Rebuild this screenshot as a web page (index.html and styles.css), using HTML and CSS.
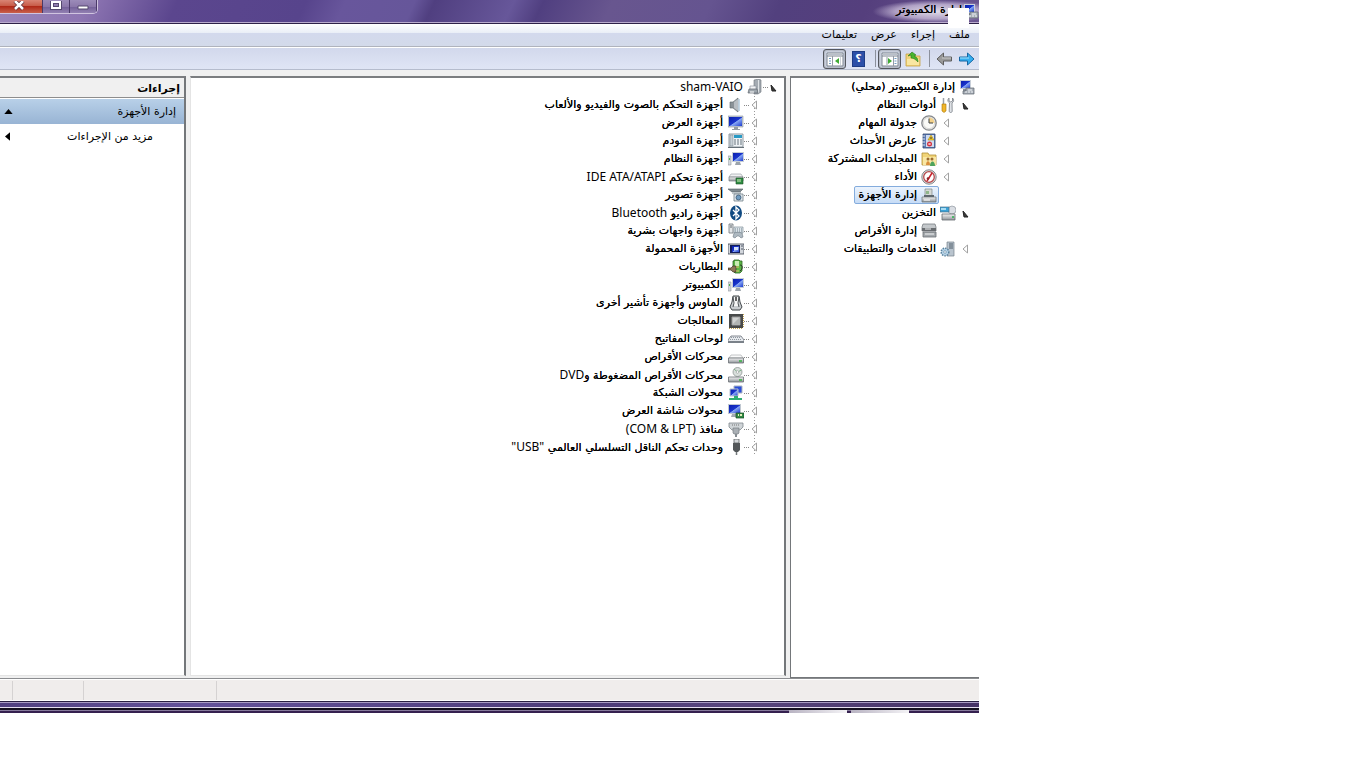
FILE: index.html
```
<!DOCTYPE html>
<html lang="ar" dir="rtl">
<head>
    <meta charset="UTF-8">
    <meta name="viewport" content="width=device-width, initial-scale=1.0">
    <title>إدارة الكمبيوتر</title>
    <link rel="stylesheet" href="styles.css">
</head>
<body>
    <!-- icon sprite -->
    <svg class="sprite" aria-hidden="true">
        <defs>
            <linearGradient id="blue" x1="0" y1="0" x2="1" y2="1">
                <stop offset="0" stop-color="#0a1fae"/><stop offset=".5" stop-color="#1a35cc"/><stop offset=".55" stop-color="#88a8f4"/><stop offset="1" stop-color="#1c3bd0"/>
            </linearGradient>
            <linearGradient id="grey" x1="0" y1="0" x2="0" y2="1">
                <stop offset="0" stop-color="#f4f4f4"/><stop offset="1" stop-color="#8f9499"/>
            </linearGradient>
        </defs>
        <symbol id="i-computer" viewBox="0 0 16 16"><path d="M1 1h11v9H1z" fill="#c9d0da"/><path d="M2 2h9v7H2z" fill="url(#blue)"/><path d="M4 10h5v2H4z" fill="#8b929b"/><path d="M7 9h8v6H4v-3h3z" fill="#a9b0b8" stroke="#5d656e" stroke-width=".7"/><path d="M6 13h2M9 13h2M12 13h2M9 11h4" stroke="#eef1f5"/></symbol>
        <symbol id="i-tools" viewBox="0 0 16 16"><path d="M3.500 1v7" stroke="#9aa0a8" stroke-width="1.500"/><path d="M2 7h4v7l-2 1.500L2 14z" fill="#f0b62c" stroke="#a97508" stroke-width=".6"/><path d="M9 1c-2 2-1 4 .5 5l-.3 8c0 2 3 2 3 0l-.2-8c2-1 2-4 .5-5v3l-1.700 1L9 4z" fill="#dfe2e6" stroke="#777d85" stroke-width=".8"/></symbol>
        <symbol id="i-clock" viewBox="0 0 16 16"><circle cx="8" cy="8" r="7.200" fill="#ecebe6" stroke="#85888c" stroke-width="1.300"/><circle cx="8" cy="8" r="5.600" fill="#fafaf7" stroke="#c6c8c9" stroke-width=".6"/><path d="M8 2.500A5.500 5.500 0 0 1 13.500 8H8z" fill="#f3d28c"/><path d="M8 3.500V8h4" fill="none" stroke="#3f4245"/></symbol>
        <symbol id="i-events" viewBox="0 0 16 16"><path d="M2 1h12v14H2z" fill="#5b79b3" stroke="#32496f" stroke-width=".8"/><path d="M5 2h8v12H5z" fill="#cfdcf0"/><path d="M1 3h3M1 6h3M1 9h3M1 12h3" stroke="#dce3ef"/><path d="M10 2l3 5H7z" fill="#f7cf2b" stroke="#9f7b00" stroke-width=".5"/><path d="M10 4v2" stroke="#333"/><circle cx="8.500" cy="11" r="2.500" fill="#d4313e"/><path d="M7.500 10l2 2M9.500 10l-2 2" stroke="#fff" stroke-width=".8"/></symbol>
        <symbol id="i-shared" viewBox="0 0 16 16"><path d="M1 2h6l1 2h7v10H1z" fill="#f1d477" stroke="#b18f37" stroke-width=".8"/><path d="M2 6h13v8H2z" fill="#f9e7a3"/><circle cx="7" cy="8" r="1.500" fill="#9a6a30"/><circle cx="11" cy="8" r="1.500" fill="#9a6a30"/><path d="M5 14c0-5 4-5 4 0z" fill="#d98e3a"/><path d="M9 15c0-6 5-6 5 0z" fill="#4fa35c"/></symbol>
        <symbol id="i-gauge" viewBox="0 0 16 16"><circle cx="8" cy="8" r="7.200" fill="#dcdddd" stroke="#85898c"/><circle cx="8" cy="8" r="5.300" fill="#fff" stroke="#b6494c" stroke-width="1.300"/><path d="M6 12l5-8" stroke="#c9202a" stroke-width="1.500"/><circle cx="7" cy="9.500" r="1.300" fill="#8e2228"/></symbol>
        <symbol id="i-devices" viewBox="0 0 16 16"><path d="M4 2h7v8H4z" fill="#d5d9d5" stroke="#7f8789" stroke-width=".7"/><path d="M5 4h3v3H5z" fill="#8fb68b"/><path d="M3 8h10v3H3z" fill="#5f686e"/><path d="M1 10h14v5H1z" fill="url(#grey)" stroke="#666d73" stroke-width=".7"/><path d="M3 13h6" stroke="#fff"/></symbol>
        <symbol id="i-storage" viewBox="0 0 16 16"><circle cx="12" cy="5" r="4" fill="#d9dde3" stroke="#9299a2" stroke-width=".7"/><path d="M0 2h9v5H0z" fill="#3aa2d8" stroke="#4d7188" stroke-width=".7"/><path d="M1 3h5v2H1z" fill="#a7dcf4"/><path d="M2 9h13v6H2z" fill="url(#grey)" stroke="#656a70" stroke-width=".8"/><path d="M12 12h2" stroke="#29b34b" stroke-width="1.500"/></symbol>
        <symbol id="i-disks" viewBox="0 0 16 16"><path d="M2 1h12l1 3v4H1V4z" fill="#c4c8cb" stroke="#7a7f83" stroke-width=".8"/><path d="M1 5h14v3H1z" fill="#686c70"/><path d="M2 9h13v5H2z" fill="#a3a8ac" stroke="#6b7074" stroke-width=".8"/><path d="M4 6h6M4 11h9" stroke="#f1f2f3"/></symbol>
        <symbol id="i-services" viewBox="0 0 16 16"><path d="M7 1h7v14H7z" fill="#b9c4ce" stroke="#75818b" stroke-width=".7"/><path d="M9 3h4M9 5h4M9 7h4" stroke="#4f5d68"/><circle cx="5" cy="11" r="3.800" fill="#b6d3e8" stroke="#58829e" stroke-width="1.500" stroke-dasharray="1.500 1"/><circle cx="5" cy="11" r="1.300" fill="#fff" stroke="#58829e" stroke-width=".6"/></symbol>
        <symbol id="i-host" viewBox="0 0 16 16"><path d="M7 1l5-1 2 1v12l-3 2H7z" fill="#a4abb2" stroke="#6b7279" stroke-width=".6"/><path d="M11.500 1v13" stroke="#dfe3e6"/><path d="M3 7h6v4H3z" fill="#f1f3f5" stroke="#858c93" stroke-width=".6"/><path d="M2 10h8l1 4H1z" fill="#9da5ac" stroke="#626970" stroke-width=".7"/><path d="M3 13h4" stroke="#fff"/></symbol>
        <symbol id="i-sound" viewBox="0 0 16 16"><path d="M2 5h3l5-4v14l-5-4H2z" fill="#8b9298" stroke="#5d646a" stroke-width=".6"/><path d="M6 5l4-3v12l-4-3z" fill="#b9bec3"/><path d="M11 2v12" stroke="#b3cadb" stroke-width="1.500"/></symbol>
        <symbol id="i-monitor" viewBox="0 0 16 16"><path d="M0 1h15v11H0z" fill="#c3cad3" stroke="#8c949d" stroke-width=".6"/><path d="M1 2h13v9H1z" fill="url(#blue)"/><path d="M6 12h4v2h2v1H4v-1h2z" fill="#949ca5"/></symbol>
        <symbol id="i-modem" viewBox="0 0 16 16"><path d="M1 1h14v13H1z" fill="#eef3f6" stroke="#77828a" stroke-width=".8"/><path d="M2 2h3v11H2z" fill="#c5ced5" stroke="#75818a" stroke-width=".5"/><path d="M6 2h8v3H6z" fill="#299ac5"/><path d="M6 7h8M6 9h8M6 11h8" stroke="#66737c" stroke-dasharray="2 1"/><path d="M0 14h16v1H0z" fill="#657078"/></symbol>
        <symbol id="i-pc" viewBox="0 0 16 16"><path d="M4 1h12v10H4z" fill="#c7ced6"/><path d="M5 2h10v8H5z" fill="url(#blue)"/><path d="M8 11h4l1 3H7z" fill="#9ba3ab"/><path d="M0 5h3v9H0z" fill="#d4d9dd" stroke="#8d959c" stroke-width=".6"/><path d="M1 8h1" stroke="#4fb04c" stroke-width="2"/></symbol>
        <symbol id="i-ide" viewBox="0 0 16 16"><path d="M3 5h10l2 3H1z" fill="#f0f1f2" stroke="#92989d" stroke-width=".6"/><path d="M1 8h14v4H1z" fill="url(#grey)" stroke="#767c81" stroke-width=".7"/><path d="M8 9h7v6H8z" fill="#2f8d43" stroke="#174f24" stroke-width=".6"/><path d="M10 10v3M12 10v3" stroke="#d7ecc0"/></symbol>
        <symbol id="i-imaging" viewBox="0 0 16 16"><path d="M0 2h15l-3 3H4z" fill="#808b91" stroke="#4e595f" stroke-width=".6"/><path d="M4 5h9v2H4z" fill="#bcc4c8"/><path d="M6 7h9v7H6z" fill="#dfe7ed" stroke="#718089" stroke-width=".8"/><circle cx="10.500" cy="10.500" r="2.500" fill="#6f9bc0" stroke="#38566f" stroke-width=".8"/></symbol>
        <symbol id="i-bluetooth" viewBox="0 0 16 16"><ellipse cx="8" cy="8" rx="6" ry="7.500" fill="#104a82"/><path d="M5 5l6 6-3 3V2l3 3-6 6" fill="none" stroke="#fff" stroke-width="1.300"/></symbol>
        <symbol id="i-hid" viewBox="0 0 16 16"><path d="M1 1h4v9H1z" fill="#e4e7e9" stroke="#6c747a" stroke-width=".8"/><path d="M3 2v3" stroke="#5e666c"/><path d="M6 4h9v6H6z" fill="#dce5eb" stroke="#81909a" stroke-width=".7"/><path d="M7 6h7M7 8h7" stroke="#72818a" stroke-dasharray="1 1"/><path d="M6 10c2-1 6-1 8 0l1 4-2 1-2-2H9l-2 2-2-1z" fill="#aeb9c1" stroke="#6e7b84" stroke-width=".6"/></symbol>
        <symbol id="i-portable" viewBox="0 0 16 16"><path d="M0 3h16v10H0z" fill="#d2d6dc" stroke="#3d4450" stroke-width=".8"/><path d="M2 4h10v8H2z" fill="#101c5c"/><path d="M4 5h7v6H4z" fill="url(#blue)"/><path d="M6 6h4v3H6z" fill="#d2e0fb"/><path d="M13 5h2M13 8h2" stroke="#4d5664"/></symbol>
        <symbol id="i-battery" viewBox="0 0 16 16"><path d="M6 1h5l1 1h2v10l-2 2H7l-2-2V2h1z" fill="#5cb645" stroke="#2f6523" stroke-width=".8"/><path d="M7 2h4v5H7z" fill="#c9ecb3"/><path d="M0 9h3l2-2h3v6H5L3 11H0z" fill="#8d7857" stroke="#332719" stroke-width=".6"/><path d="M8 8h3M8 12h3" stroke="#e4c46c"/><path d="M12 6c3 0 3 4 0 6" fill="none" stroke="#293329"/></symbol>
        <symbol id="i-mouse" viewBox="0 0 16 16"><path d="M5 1h6l1 6 2 5-2 3H4l-2-3 2-5z" fill="#c8cccf" stroke="#43484b"/><path d="M6 2h4l1 6-1 3H6L5 8z" fill="#f5f6f6"/><path d="M5 2l1 6-1 4M11 2l-1 6 1 4" fill="none" stroke="#4c5154"/><path d="M8 2v4" stroke="#333" stroke-width="1.500"/></symbol>
        <symbol id="i-cpu" viewBox="0 0 16 16"><path d="M1 1h14v14H1z" fill="#484a4a"/><path d="M1 15.500h14M15.500 1v14" stroke="#c3a24d" stroke-dasharray="1 1"/><path d="M4 4h8v8H4z" fill="#d0d2d1" stroke="#999"/><path d="M4 12l8-8v8z" fill="#b1b4b3"/></symbol>
        <symbol id="i-keyboard" viewBox="0 0 16 16"><path d="M3 5h10l3 4v2H0V9z" fill="#e5e8ec" stroke="#697078" stroke-width=".8"/><path d="M3 6.500h10M2 8.500h12" stroke="#8f979f" stroke-dasharray="1 1"/><path d="M0 10h16v2H0z" fill="#7a8189"/></symbol>
        <symbol id="i-drive" viewBox="0 0 16 16"><path d="M3 6h10l2 3H1z" fill="#fafafa" stroke="#9da1a5" stroke-width=".6"/><path d="M.5 9h15v5H.5z" fill="url(#grey)" stroke="#6a6f73" stroke-width=".8"/><path d="M11 12h3" stroke="#35b33f" stroke-width="1.500"/></symbol>
        <symbol id="i-dvd" viewBox="0 0 16 16"><circle cx="9.500" cy="5" r="4.500" fill="#d9dfdc" stroke="#8e9693" stroke-width=".8"/><path d="M9.500 5L6 2M9.500 5l4-2" stroke="#81b28c"/><circle cx="9.500" cy="5" r="1.300" fill="#fff" stroke="#8e9693" stroke-width=".6"/><path d="M.5 10h15v5H.5z" fill="url(#grey)" stroke="#6a6f73" stroke-width=".8"/><path d="M11 13h3" stroke="#35b33f" stroke-width="1.500"/></symbol>
        <symbol id="i-network" viewBox="0 0 16 16"><path d="M6 1h8v7H6z" fill="#2b4fd8" stroke="#aab3c0"/><path d="M2 4h8v7H2z" fill="url(#blue)" stroke="#b9c2ce"/><path d="M6 11h4v2h4v2H1v-2h5z" fill="#2fae73"/></symbol>
        <symbol id="i-display" viewBox="0 0 16 16"><path d="M0 1h13v10H0z" fill="#c0c8d1"/><path d="M1 2h11v8H1z" fill="url(#blue)"/><path d="M4 11h5v3H3z" fill="#a2aab2"/><path d="M8 10h8v5H8z" fill="#328a45" stroke="#164c22" stroke-width=".7"/><path d="M10 12h1M12 12h2" stroke="#e3f0bb" stroke-width="2"/></symbol>
        <symbol id="i-port" viewBox="0 0 16 16"><path d="M1 2h14v4l-3 3H4L1 6z" fill="#cfd4d7" stroke="#80888d" stroke-width=".8"/><path d="M4 4h8" stroke="#777" stroke-dasharray="1 1"/><path d="M5 7h6v5l-1 1H6l-1-1z" fill="#aab0b5" stroke="#6e757a" stroke-width=".6"/><path d="M8 13v3" stroke="#868d92" stroke-width="2"/></symbol>
        <symbol id="i-usb" viewBox="0 0 16 16"><path d="M6 0h5v4H6z" fill="#d6d9db" stroke="#5d6265" stroke-width=".8"/><path d="M5 4h7v7l-2 2H7l-2-2z" fill="#535759"/><path d="M8.500 13v3" stroke="#73787b" stroke-width="1.500"/></symbol>
        <symbol id="i-forward" viewBox="0 0 16 14"><path d="M.5 5h8V1L15 7l-6.500 6V9h-8z" fill="#35aef0" stroke="#1767a3"/><path d="M1 6h9" stroke="#a3e2fb"/></symbol>
        <symbol id="i-back" viewBox="0 0 16 14"><path d="M15.500 5h-8V1L1 7l6.500 6V9h8z" fill="#9b9b9b" stroke="#5e5e5e"/><path d="M6 6h9" stroke="#ccc"/></symbol>
        <symbol id="i-folder" viewBox="0 0 16 16"><path d="M1 3h5l1 2h8v10H1z" fill="#f2d479" stroke="#c6a246" stroke-width=".8"/><path d="M2 8h12v6H2z" fill="#f9e6a1"/><path d="M3 5l4-4 4 3-2 1c3 1 4 3 4 6-2-2-4-4-7-4V4z" fill="#48b52d" stroke="#267717" stroke-width=".6"/></symbol>
        <symbol id="i-pane-right" viewBox="0 0 18 16"><path d="M1 2h16v13H1z" fill="#fff" stroke="#7b8390"/><path d="M1 5h16" stroke="#7b8390"/><path d="M2 3.500h14" stroke="#b8bfca"/><path d="M12.500 5v10M6 6v8" stroke="#949ba6"/><path d="M13.500 7.500h2m-2 2.500h2m-2 2.500h2" stroke="#6f9bc0"/><path d="M7 7l4 3-4 3z" fill="#3faa33"/></symbol>
        <symbol id="i-pane-left" viewBox="0 0 18 16"><path d="M1 2h16v13H1z" fill="#fff" stroke="#7b8390"/><path d="M1 5h16" stroke="#7b8390"/><path d="M2 3.500h14" stroke="#b8bfca"/><path d="M6.500 5v10" stroke="#949ba6"/><path d="M3 7.500h2M3 10h2M3 12.500h2" stroke="#6f9bc0"/><path d="M13 7l-4 3 4 3z" fill="#3faa33"/><path d="M14.500 6v8" stroke="#ccd1d8"/></symbol>
        <symbol id="i-closed" viewBox="0 0 8 10"><path d="M6.500 1v8L2 5z" fill="#fff" stroke="#a2a2a2"/></symbol>
        <symbol id="i-open" viewBox="0 0 8 10"><path d="M2 3l1 6h4z" fill="#3b3b3b" stroke="#222"/></symbol>
    </svg>

    <div class="window">
        <header class="titlebar">
            <div class="title">
                <svg class="icon"><use href="#i-computer"/></svg>
                <h1>إدارة الكمبيوتر</h1>
            </div>
            <div class="patch"></div>
            <div class="controls">
                <button class="control minimize" aria-label="تصغير"><svg viewBox="0 0 12 12"><path d="M1 5h10v3H1z" fill="#fff" stroke="#54496e"/></svg></button>
                <button class="control maximize" aria-label="تكبير"><svg viewBox="0 0 12 12"><path d="M2 1h8v6H2z" fill="none" stroke="#54496e" stroke-width="4"/><path d="M2 1h8v6H2z" fill="none" stroke="#fff" stroke-width="2"/></svg></button>
                <button class="control close" aria-label="إغلاق"><svg viewBox="0 0 12 12"><path d="M2 0l8 8M10 0L2 8" stroke="#5d3038" stroke-width="4"/><path d="M2 0l8 8M10 0L2 8" stroke="#fff" stroke-width="2.500"/></svg></button>
            </div>
        </header>

        <nav class="menubar">
            <button>ملف</button>
            <button>إجراء</button>
            <button>عرض</button>
            <button>تعليمات</button>
        </nav>

        <div class="toolbar">
            <button class="tool" aria-label="للأمام"><svg class="icon"><use href="#i-forward"/></svg></button>
            <button class="tool" aria-label="للخلف"><svg class="icon"><use href="#i-back"/></svg></button>
            <span class="divider"></span>
            <button class="tool" aria-label="مستوى لأعلى"><svg class="icon"><use href="#i-folder"/></svg></button>
            <button class="tool pressed" aria-label="شجرة وحدة التحكم"><svg class="icon wide"><use href="#i-pane-right"/></svg></button>
            <span class="divider"></span>
            <button class="tool" aria-label="تعليمات"><span class="help">؟</span></button>
            <button class="tool pressed" aria-label="جزء الإجراءات"><svg class="icon wide"><use href="#i-pane-left"/></svg></button>
        </div>

        <main class="panes">
            <section class="pane console">
                <ul class="tree">
                    <li>
                        <div class="row root"><span class="label"><svg class="icon"><use href="#i-computer"/></svg>إدارة الكمبيوتر (محلي)</span></div>
                        <ul>
                            <li>
                                <div class="row"><button class="toggle" aria-label="طي"><svg><use href="#i-open"/></svg></button><span class="label"><svg class="icon"><use href="#i-tools"/></svg>أدوات النظام</span></div>
                                <ul>
                                    <li class="row"><button class="toggle" aria-label="توسيع"><svg><use href="#i-closed"/></svg></button><span class="label"><svg class="icon"><use href="#i-clock"/></svg>جدولة المهام</span></li>
                                    <li class="row"><button class="toggle" aria-label="توسيع"><svg><use href="#i-closed"/></svg></button><span class="label"><svg class="icon"><use href="#i-events"/></svg>عارض الأحداث</span></li>
                                    <li class="row"><button class="toggle" aria-label="توسيع"><svg><use href="#i-closed"/></svg></button><span class="label"><svg class="icon"><use href="#i-shared"/></svg>المجلدات المشتركة</span></li>
                                    <li class="row"><button class="toggle" aria-label="توسيع"><svg><use href="#i-closed"/></svg></button><span class="label"><svg class="icon"><use href="#i-gauge"/></svg>الأداء</span></li>
                                    <li class="row"><span class="toggle"></span><span class="label selected"><svg class="icon"><use href="#i-devices"/></svg>إدارة الأجهزة</span></li>
                                </ul>
                            </li>
                            <li>
                                <div class="row"><button class="toggle" aria-label="طي"><svg><use href="#i-open"/></svg></button><span class="label"><svg class="icon"><use href="#i-storage"/></svg>التخزين</span></div>
                                <ul>
                                    <li class="row"><span class="toggle"></span><span class="label"><svg class="icon"><use href="#i-disks"/></svg>إدارة الأقراص</span></li>
                                </ul>
                            </li>
                            <li class="row"><button class="toggle" aria-label="توسيع"><svg><use href="#i-closed"/></svg></button><span class="label"><svg class="icon"><use href="#i-services"/></svg>الخدمات والتطبيقات</span></li>
                        </ul>
                    </li>
                </ul>
            </section>

            <section class="pane devices">
                <ul class="tree">
                    <li>
                        <div class="row"><button class="toggle" aria-label="طي"><svg><use href="#i-open"/></svg></button><span class="label"><svg class="icon"><use href="#i-host"/></svg><bdi class="latin">sham-VAIO</bdi></span></div>
                        <ul class="lines">
                            <li class="row"><button class="toggle" aria-label="توسيع"><svg><use href="#i-closed"/></svg></button><span class="label"><svg class="icon"><use href="#i-sound"/></svg>أجهزة التحكم بالصوت والفيديو والألعاب</span></li>
                            <li class="row"><button class="toggle" aria-label="توسيع"><svg><use href="#i-closed"/></svg></button><span class="label"><svg class="icon"><use href="#i-monitor"/></svg>أجهزة العرض</span></li>
                            <li class="row"><button class="toggle" aria-label="توسيع"><svg><use href="#i-closed"/></svg></button><span class="label"><svg class="icon"><use href="#i-modem"/></svg>أجهزة المودم</span></li>
                            <li class="row"><button class="toggle" aria-label="توسيع"><svg><use href="#i-closed"/></svg></button><span class="label"><svg class="icon"><use href="#i-pc"/></svg>أجهزة النظام</span></li>
                            <li class="row"><button class="toggle" aria-label="توسيع"><svg><use href="#i-closed"/></svg></button><span class="label"><svg class="icon"><use href="#i-ide"/></svg><span>أجهزة تحكم <bdi class="latin">IDE ATA/ATAPI</bdi></span></span></li>
                            <li class="row"><button class="toggle" aria-label="توسيع"><svg><use href="#i-closed"/></svg></button><span class="label"><svg class="icon"><use href="#i-imaging"/></svg>أجهزة تصوير</span></li>
                            <li class="row"><button class="toggle" aria-label="توسيع"><svg><use href="#i-closed"/></svg></button><span class="label"><svg class="icon"><use href="#i-bluetooth"/></svg><span>أجهزة راديو <bdi class="latin">Bluetooth</bdi></span></span></li>
                            <li class="row"><button class="toggle" aria-label="توسيع"><svg><use href="#i-closed"/></svg></button><span class="label"><svg class="icon"><use href="#i-hid"/></svg>أجهزة واجهات بشرية</span></li>
                            <li class="row"><button class="toggle" aria-label="توسيع"><svg><use href="#i-closed"/></svg></button><span class="label"><svg class="icon"><use href="#i-portable"/></svg>الأجهزة المحمولة</span></li>
                            <li class="row"><button class="toggle" aria-label="توسيع"><svg><use href="#i-closed"/></svg></button><span class="label"><svg class="icon"><use href="#i-battery"/></svg>البطاريات</span></li>
                            <li class="row"><button class="toggle" aria-label="توسيع"><svg><use href="#i-closed"/></svg></button><span class="label"><svg class="icon"><use href="#i-pc"/></svg>الكمبيوتر</span></li>
                            <li class="row"><button class="toggle" aria-label="توسيع"><svg><use href="#i-closed"/></svg></button><span class="label"><svg class="icon"><use href="#i-mouse"/></svg>الماوس وأجهزة تأشير أخرى</span></li>
                            <li class="row"><button class="toggle" aria-label="توسيع"><svg><use href="#i-closed"/></svg></button><span class="label"><svg class="icon"><use href="#i-cpu"/></svg>المعالجات</span></li>
                            <li class="row"><button class="toggle" aria-label="توسيع"><svg><use href="#i-closed"/></svg></button><span class="label"><svg class="icon"><use href="#i-keyboard"/></svg>لوحات المفاتيح</span></li>
                            <li class="row"><button class="toggle" aria-label="توسيع"><svg><use href="#i-closed"/></svg></button><span class="label"><svg class="icon"><use href="#i-drive"/></svg>محركات الأقراص</span></li>
                            <li class="row"><button class="toggle" aria-label="توسيع"><svg><use href="#i-closed"/></svg></button><span class="label"><svg class="icon"><use href="#i-dvd"/></svg><span>محركات الأقراص المضغوطة و<bdi class="latin">DVD</bdi></span></span></li>
                            <li class="row"><button class="toggle" aria-label="توسيع"><svg><use href="#i-closed"/></svg></button><span class="label"><svg class="icon"><use href="#i-network"/></svg>محولات الشبكة</span></li>
                            <li class="row"><button class="toggle" aria-label="توسيع"><svg><use href="#i-closed"/></svg></button><span class="label"><svg class="icon"><use href="#i-display"/></svg>محولات شاشة العرض</span></li>
                            <li class="row"><button class="toggle" aria-label="توسيع"><svg><use href="#i-closed"/></svg></button><span class="label"><svg class="icon"><use href="#i-port"/></svg><span>منافذ <bdi class="latin">(COM &amp; LPT)</bdi></span></span></li>
                            <li class="row"><button class="toggle" aria-label="توسيع"><svg><use href="#i-closed"/></svg></button><span class="label"><svg class="icon"><use href="#i-usb"/></svg><span>وحدات تحكم الناقل التسلسلي العالمي <bdi class="latin">"USB"</bdi></span></span></li>
                        </ul>
                    </li>
                </ul>
            </section>

            <aside class="pane actions">
                <h2>إجراءات</h2>
                <button class="group">إدارة الأجهزة <svg viewBox="0 0 10 6"><path d="M0 6h10L5 0z"/></svg></button>
                <button class="more">مزيد من الإجراءات <svg viewBox="0 0 6 10"><path d="M6 0v10L0 5z"/></svg></button>
            </aside>
        </main>

        <footer class="statusbar">
            <span></span>
            <span></span>
            <span></span>
            <span></span>
        </footer>
        <div class="frame"></div>
        <div class="taskbar">
            <span class="task"></span>
            <span class="task"></span>
        </div>
    </div>
</body>
</html>
```
FILE: styles.css
```
* {
    box-sizing: border-box;
}
body {
    margin: 0;
    background: #fff;
    color: #000;
    font-family: "DejaVu Sans", sans-serif;
    font-size: 11px;
    line-height: 18px;
}
ul {
    list-style: none;
    margin: 0;
    padding: 0;
}
button {
    font: inherit;
    color: inherit;
    border: none;
    background: none;
    padding: 0;
}
.sprite {
    position: absolute;
    width: 0;
    height: 0;
}
.icon {
    width: 16px;
    height: 16px;
    flex: none;
}
.icon.wide {
    width: 18px;
}
.latin {
    font-family: "Noto Sans", sans-serif;
    font-size: 12px;
    text-shadow: none;
}
.window {
    width: calc(100% - 387px);
    height: calc(100vh - 55px);
    min-height: 520px;
    margin-right: 387px;
    display: flex;
    flex-direction: column;
    background: #f0f0f0;
    overflow: hidden;
    text-shadow: 0 0 #000;
}

/* title bar */
.titlebar {
    position: relative;
    display: flex;
    justify-content: space-between;
    height: 24px;
    flex: none;
    border-bottom: 1px solid #2d2148;
    box-shadow: inset 0 -1px #b9abcd;
    background: linear-gradient(115deg, #9a86bb 0, #8e76b3 9%, #5b468e 18%, #57448c 31%, #68569c 35%, #66569a 42%, #503f80 44%, #67579a 52%, #503f80 55%, #68568f 62%, #655490 72%, #52407e 79%, #553f7d 88%, #6b5791 100%);
}
.title {
    display: flex;
    align-items: flex-start;
    gap: 1px;
    padding: 1px 0 0 24px;
    background: radial-gradient(ellipse at 60% 50%, rgba(255, 255, 255, 0.8) 0, rgba(230, 220, 240, 0.6) 45%, transparent 70%);
}
.title .icon {
    margin-top: 2px;
}
.title h1 {
    margin: 0;
    font-size: 11px;
    font-weight: normal;
    line-height: 18px;
}
.patch {
    position: absolute;
    top: 8px;
    right: 10px;
    width: 21px;
    height: 20px;
    background: #fff;
}
.controls {
    display: flex;
    height: 14px;
    border: 1px solid #d0c4e0;
    border-width: 0 1px 1px 0;
    border-radius: 0 0 5px 0;
    overflow: hidden;
}
.control {
    width: 27px;
    border-right: 1px solid #4a3a68;
    background: linear-gradient(#9c8cb9 0, #8b78aa 50%, #75629a 55%, #9280b2 100%);
}
.control svg {
    display: block;
    width: 12px;
    height: 12px;
    margin: 0 auto;
}
.close {
    width: 43px;
    background: linear-gradient(#d98474 0, #c85c48 45%, #b02a18 50%, #c9604c 100%);
}
.close svg {
    margin-right: 17px;
}

/* menu and tools */
.menubar {
    display: flex;
    gap: 14px;
    align-items: center;
    height: 23px;
    flex: none;
    padding: 0 9px;
    border-bottom: 1px solid #b0b3bd;
    background: linear-gradient(#fff 0, #e9eef7 9px, #d3d9ed 9px, #d3daea 100%);
}
.toolbar {
    display: flex;
    align-items: center;
    height: 23px;
    flex: none;
    padding: 0 4px;
    border-top: 1px solid #fff;
    border-bottom: 1px solid #b5bccd;
    background: linear-gradient(#d2d8ec, #dfe5f5);
}
.tool {
    display: flex;
    align-items: center;
    justify-content: center;
    width: 23px;
    height: 20px;
}
.tool:first-child {
    width: 16px;
    margin-left: 4px;
}
.pressed {
    border: 1px solid #54575e;
    border-radius: 3px;
    background: #cdd3e0;
    box-shadow: inset 0 0 2px #777c87;
}
.pressed:last-child {
    margin-right: 1px;
}
.divider {
    width: 1px;
    height: 17px;
    margin: 0 2px;
    background: #8b909c;
}
.divider + .tool {
    margin-right: 3px;
}
.help {
    width: 13px;
    height: 16px;
    background: #2c4fa8;
    border: 1px solid #1e3c85;
    color: #fff;
    font-weight: bold;
    line-height: 14px;
    text-shadow: none;
}

/* panes */
.panes {
    display: flex;
    gap: 4px;
    flex: 1;
    min-height: 0;
    padding-top: 6px;
}
.pane {
    background: #fff;
    border: 1px solid #74777a;
    border-top: 2px solid #7b7d80;
    overflow: hidden;
}
.console {
    width: 189px;
    flex: none;
    border-right: none;
}
.devices {
    flex: 1;
    margin-bottom: 2px;
    border-left-color: #e4e4e4;
    border-right-width: 2px;
    border-bottom-color: #e4e4e4;
}
.actions {
    width: 186px;
    flex: none;
    margin-bottom: 2px;
    border-left: none;
    border-right-width: 2px;
    border-bottom-color: #e4e4e4;
}
.row {
    display: flex;
    align-items: center;
    height: 18px;
    white-space: nowrap;
}
.label {
    display: flex;
    align-items: center;
    gap: 4px;
    height: 18px;
    padding: 0 2px;
}
.selected {
    border: 1px solid #84acdd;
    border-radius: 2px;
    padding: 0 1px 0 3px;
    background: linear-gradient(#ecf4fd, #c6dcf6);
}
.toggle {
    width: 8px;
    height: 10px;
    flex: none;
}
.toggle svg {
    display: block;
    width: 8px;
    height: 10px;
}
.console .root {
    padding-right: 2px;
}
.console ul ul {
    padding-right: 10px;
}
.console ul ul ul {
    padding-right: 19px;
}
.console .toggle {
    margin-left: 3px;
}
.devices .tree {
    padding-right: 7px;
}
.devices .label {
    padding-right: 6px;
    background: repeating-linear-gradient(to left, #888 0, #888 1px, transparent 1px, transparent 2px) right 1px top 9px / 5px 1px no-repeat;
}
.lines {
    padding-right: 19px;
    background: repeating-linear-gradient(#999 0, #999 1px, transparent 1px, transparent 3px) right 22px top 0 / 1px 100% no-repeat;
}
.lines .label {
    gap: 5px;
}

/* actions */
.actions h2 {
    margin: 0 0 1px;
    padding: 2px 4px 0;
    height: 20px;
    border-bottom: 1px solid #8d8d8d;
    background: #f0f0f0;
    font-size: 11px;
    line-height: 18px;
    text-shadow: none;
}
.actions button {
    display: flex;
    align-items: center;
    justify-content: space-between;
    width: 100%;
    height: 25px;
}
.actions .group {
    padding: 0 8px 0 4px;
    background: linear-gradient(#b8d0e8, #98b4d4);
}
.actions .more {
    padding: 0 31px 0 5px;
}
.group svg {
    width: 9px;
    height: 5px;
}
.more svg {
    width: 5px;
    height: 9px;
}

/* bottom edge */
.statusbar {
    display: flex;
    height: 23px;
    flex: none;
    border-top: 1px solid #8b8d90;
    border-bottom: 1px solid #fff;
    box-shadow: inset 0 1px #fff;
    background: #f0edec;
}
.statusbar span {
    width: 71px;
    margin-top: 2px;
    border-left: 1px solid #d5d2d2;
}
.statusbar span:first-child {
    flex: 1;
}
.statusbar span:nth-child(2) {
    width: 133px;
}
.statusbar span:last-child {
    width: 12px;
    border: none;
}
.frame {
    height: 7px;
    flex: none;
    border-top: 1px solid #281f42;
    border-bottom: 1px solid #e5dff0;
    box-shadow: inset 0 1px #a99cc4;
    background: linear-gradient(to right, #504080, #63529a 20%, #4c3b78 60%, #58467e 75%, #453266);
}
.taskbar {
    display: flex;
    gap: 4px;
    height: 5px;
    flex: none;
    padding: 0 70px;
    border-top: 2px solid #14101f;
    box-shadow: inset 0 1px #867a9c;
    background: #35204f;
}
.task {
    width: 58px;
    background: linear-gradient(to right, #b8b3c2, #f4f3f6);
}
```
